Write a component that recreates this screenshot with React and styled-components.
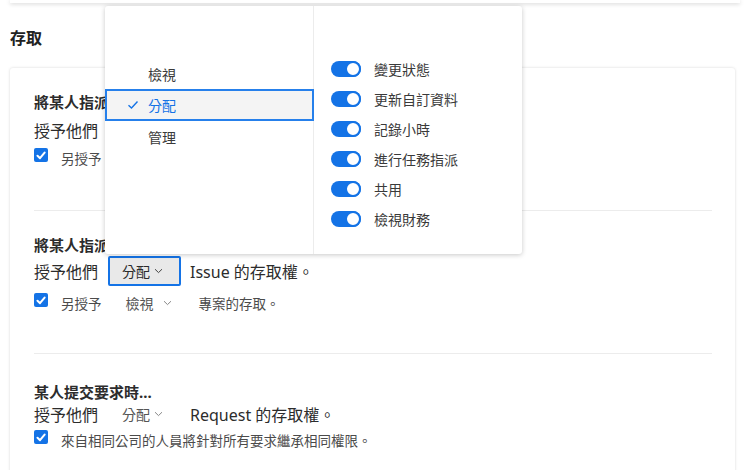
import React from "react";
import styled, { createGlobalStyle } from "styled-components";

const GlobalStyle = createGlobalStyle`
  body {
    margin: 0;
    background: #ffffff;
    font-family: "Noto Sans", "Noto Sans CJK TC", sans-serif;
    color: #2c2c2c;
  }
`;

const BLUE = "#1473e6";

const Page = styled.div`
  position: relative;
  width: 750px;
  height: 470px;
  overflow: hidden;
`;

const TopStrip = styled.div`
  height: 3px;
  margin: 0 10px;
  background: #fff;
  box-shadow: 0 1px 4px rgba(0, 0, 0, 0.18);
`;

const Heading = styled.h2`
  margin: 0;
  padding: 24px 10px 0;
  font-size: 16px;
  font-weight: 700;
  line-height: 22px;
  color: #222;
`;

const Card = styled.div`
  margin: 19px 15px 0 10px;
  padding: 0 23px 0 24px;
  background: #fff;
  border-radius: 3px;
  box-shadow: 0 0 3px rgba(0, 0, 0, 0.16);
  height: 420px;
`;

const Section = styled.div`
  padding-top: ${(p) => p.$top}px;
  padding-bottom: ${(p) => p.$bottom}px;
  border-bottom: ${(p) => (p.$last ? "none" : "1px solid #ececec")};
`;

const Title = styled.div`
  font-size: 15px;
  font-weight: 700;
  line-height: 22px;
  color: #2c2c2c;
`;

const Row = styled.div`
  display: flex;
  align-items: center;
  height: ${(p) => p.$h || 22}px;
  margin-top: ${(p) => p.$gap || 0}px;
  font-size: 16px;
  color: #2c2c2c;
`;

const SelectBox = styled.div`
  display: flex;
  align-items: center;
  gap: 4px;
  box-sizing: border-box;
  width: 73px;
  height: 30px;
  margin: 0 9px 0 10px;
  padding-left: 12px;
  font-size: 14px;
  border-radius: 2px;
  border: 2px solid ${(p) => (p.$focused ? BLUE : "transparent")};
  background: ${(p) => (p.$focused ? "#e9e9e9" : "transparent")};
  color: ${(p) => (p.$focused ? "#2c2c2c" : "#555")};
`;

const CheckRow = styled.div`
  display: flex;
  align-items: center;
  height: 22px;
  margin-top: ${(p) => p.$gap}px;
  font-size: 13.5px;
  color: #4b4b4b;
`;

const CheckBox = styled.span`
  display: inline-flex;
  align-items: center;
  justify-content: center;
  width: 14px;
  height: 14px;
  margin-right: 13px;
  margin-top: -6px;
  border-radius: 2px;
  background: ${BLUE};
`;

const QuietSelect = styled.span`
  display: inline-flex;
  align-items: center;
  gap: 9px;
  margin: 0 27px 0 24px;
  font-size: 14px;
  color: #555;
`;

const Popover = styled.div`
  position: absolute;
  left: 105px;
  top: 6px;
  width: 417px;
  height: 248px;
  display: grid;
  grid-template-columns: 209px 1fr;
  background: #fff;
  border-radius: 3px;
  box-shadow: 0 1px 5px rgba(0, 0, 0, 0.22);
  z-index: 2;
`;

const Menu = styled.div`
  padding-top: 52px;
  border-right: 1px solid #ececec;
`;

const MenuItem = styled.div`
  display: flex;
  align-items: center;
  box-sizing: border-box;
  height: ${(p) => (p.$selected ? 32 : 31)}px;
  margin-right: ${(p) => (p.$selected ? -1 : 0)}px;
  padding-left: ${(p) => (p.$selected ? 20 : 43)}px;
  font-size: 14px;
  color: ${(p) => (p.$selected ? BLUE : "#3a3a3a")};
  background: ${(p) => (p.$selected ? "#f4f4f4" : "transparent")};
  border: ${(p) => (p.$selected ? `2px solid #2680eb` : "none")};
  gap: 9px;
`;

const Toggles = styled.div`
  padding: 48px 0 0 17px;
`;

const ToggleRow = styled.div`
  display: flex;
  align-items: center;
  height: 30px;
  gap: 13px;
  font-size: 14px;
  color: #3a3a3a;
`;

const Track = styled.span`
  position: relative;
  display: inline-block;
  width: 30px;
  height: 16px;
  border-radius: 8px;
  background: ${BLUE};
  &::after {
    content: "";
    position: absolute;
    right: 0;
    top: 0;
    box-sizing: border-box;
    width: 16px;
    height: 16px;
    border-radius: 50%;
    background: #fff;
    border: 2px solid ${BLUE};
  }
`;

const Chevron = ({ color = "#555" }) => (
  <svg width="9" height="6" viewBox="0 0 9 6">
    <path d="M1 1.2 L4.5 4.6 L8 1.2" fill="none" stroke={color} strokeWidth="1" />
  </svg>
);

const Tick = () => (
  <svg width="10" height="9" viewBox="0 0 10 9">
    <path d="M1.5 4.8 L4 7.2 L8.6 1.6" fill="none" stroke="#fff" strokeWidth="2" strokeLinecap="round" strokeLinejoin="round" />
  </svg>
);

const MenuCheck = () => (
  <svg width="12" height="10" viewBox="0 0 12 10">
    <path d="M1.5 5.2 L4.5 8 L10.5 1.5" fill="none" stroke={BLUE} strokeWidth="1.4" />
  </svg>
);

const toggles = ["變更狀態", "更新自訂資料", "記錄小時", "進行任務指派", "共用", "檢視財務"];

function AlsoGrant({ gap }) {
  return (
    <CheckRow $gap={gap}>
      <CheckBox>
        <Tick />
      </CheckBox>
      另授予
      <QuietSelect>
        檢視 <Chevron color="#888" />
      </QuietSelect>
      專案的存取。
    </CheckRow>
  );
}

export default function App() {
  return (
    <Page>
      <GlobalStyle />
      <TopStrip />
      <Heading>存取</Heading>
      <Card>
        <Section $top={23} $bottom={41}>
          <Title>將某人指派</Title>
          <Row $gap={6}>授予他們</Row>
          <CheckRow $gap={6}>
            <CheckBox>
              <Tick />
            </CheckBox>
            另授予
          </CheckRow>
        </Section>
        <Section $top={23} $bottom={39}>
          <Title>將某人指派</Title>
          <Row $h={30}>
            授予他們
            <SelectBox $focused>
              分配 <Chevron color="#444" />
            </SelectBox>
            Issue 的存取權。
          </Row>
          <AlsoGrant gap={6} />
        </Section>
        <Section $top={27} $bottom={20} $last>
          <Title>某人提交要求時...</Title>
          <Row>
            授予他們
            <SelectBox>
              分配 <Chevron color="#888" />
            </SelectBox>
            Request 的存取權。
          </Row>
          <CheckRow $gap={4}>
            <CheckBox>
              <Tick />
            </CheckBox>
            來自相同公司的人員將針對所有要求繼承相同權限。
          </CheckRow>
        </Section>
      </Card>

      <Popover>
        <Menu>
          <MenuItem>檢視</MenuItem>
          <MenuItem $selected>
            <MenuCheck />
            分配
          </MenuItem>
          <MenuItem>管理</MenuItem>
        </Menu>
        <Toggles>
          {toggles.map((t) => (
            <ToggleRow key={t}>
              <Track />
              {t}
            </ToggleRow>
          ))}
        </Toggles>
      </Popover>
    </Page>
  );
}
